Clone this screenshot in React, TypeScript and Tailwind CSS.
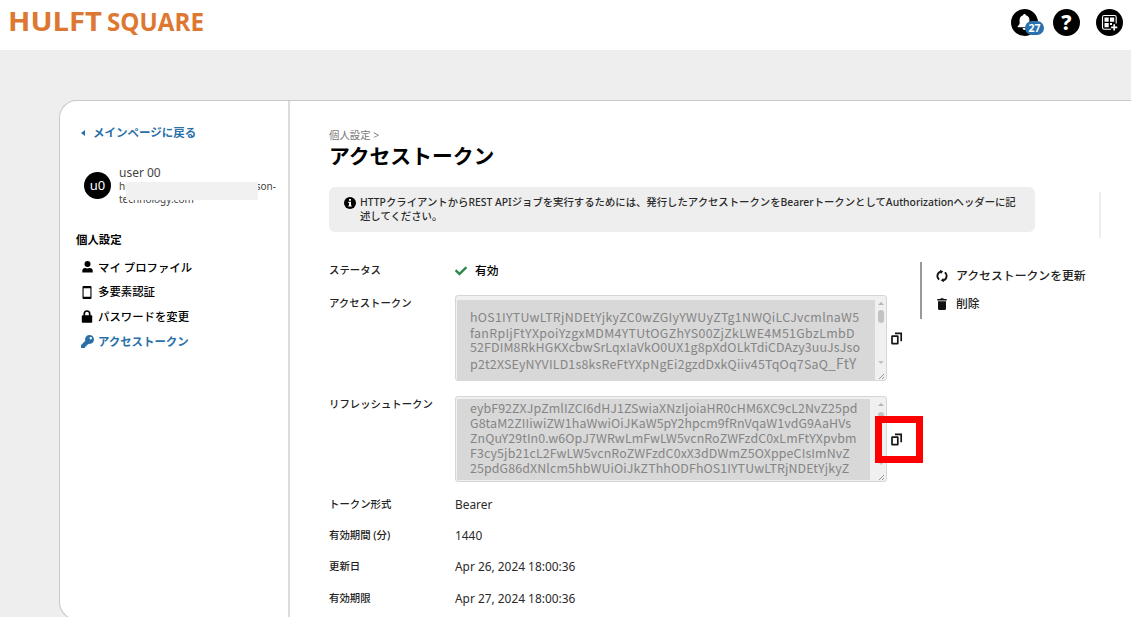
import type { ReactNode } from "react";
import { FaCheck, FaKey } from "react-icons/fa";

interface TokenLine {
  text: string;
  className: string;
  tail?: string;
}

const accessToken: TokenLine[] = [
  { text: "hOS1IYTUwLTRjNDEtYjkyZC0wZGIyYWUyZTg1NWQiLCJvcmlnaW5", className: "h-4 tracking-[0.28px]" },
  { text: "fanRpIjFtYXpoiYzgxMDM4YTUtOGZhYS00ZjZkLWE4M51GbzLmbD", className: "h-4 tracking-[0.31px]" },
  { text: "52FDIM8RkHGKXcbwSrLqxIaVkO0UX1g8pXdOLkTdiCDAzy3uuJsJso", className: "h-[13px] tracking-[0.13px]" },
  { text: "p2t2XSEyNYVILD1s8ksReFtYXpNgEi2gzdDxkQiiv45TqOq7SaQ", tail: "_FtY", className: "h-5 tracking-[0.2px]" },
];

const refreshToken: TokenLine[] = [
  { text: "eybF92ZXJpZmlIZCI6dHJ1ZSwiaXNzIjoiaHR0cHM6XC9cL2NvZ25pd", className: "h-[15px] tracking-[0.07px]" },
  { text: "G8taM2ZIIiwiZW1haWwiOiJKaW5pY2hpcm9fRnVqaW1vdG9AaHVs", className: "h-[15px] tracking-[0.1px]" },
  { text: "ZnQuY29tIn0.w6OpJ7WRwLmFwLW5vcnRoZWFzdC0xLmFtYXpvbm", className: "h-[15px] tracking-[0.07px]" },
  { text: "F3cy5jb21cL2FwLW5vcnRoZWFzdC0xX3dDWmZ5OXppeCIsImNvZ", className: "h-[15px] tracking-[0.13px]" },
  { text: "25pdG86dXNlcm5hbWUiOiJkZThhODFhOS1IYTUwLTRjNDEtYjkyZ", className: "h-[15px] tracking-[0.12px]" },
];

const details = [
  { label: "トークン形式", value: "Bearer" },
  { label: "有効期間 (分)", value: "1440" },
  { label: "更新日", value: "Apr 26, 2024 18:00:36" },
  { label: "有効期限", value: "Apr 27, 2024 18:00:36" },
];

function PersonIcon() {
  return (
    <svg width="11" height="12" viewBox="0 0 11 12">
      <circle cx="5.5" cy="3.1" r="3" />
      <path d="M.3 11.6V9.8Q.3 7.3 3.2 7q2.3.9 4.6 0 2.9.3 2.9 2.8v1.8Z" />
    </svg>
  );
}

function PhoneIcon() {
  return (
    <svg width="10" height="13" viewBox="0 0 10 13">
      <path fillRule="evenodd" d="M1.5 0h7Q9.5 0 9.5 1v11q0 1-1 1h-7q-1 0-1-1V1q0-1 1-1ZM1.6 2.2v8.6h6.8V2.2Z" />
    </svg>
  );
}

function LockIcon() {
  return (
    <svg width="12" height="13" viewBox="0 0 12 13">
      <path d="M3.3 6V3.7a2.7 2.7 0 0 1 5.4 0V6" fill="none" stroke="#000" strokeWidth="1.7" />
      <rect x="0.8" y="5.2" width="10.4" height="7.6" rx="0.8" />
    </svg>
  );
}

function RefreshIcon() {
  return (
    <svg width="12" height="12" viewBox="0 0 12 12" overflow="visible">
      <g fill="none" stroke="#111" strokeWidth="1.8">
        <path d="M3.2 9.6A4.5 4.5 0 0 1 4.9 1.6" />
        <path d="M8.8 2.4a4.5 4.5 0 0 1-1.7 8" />
      </g>
      <path d="M4-.2 7.2 1.5 4.8 4ZM8 12.2 4.8 10.5 7.2 8Z" fill="#111" />
    </svg>
  );
}

function TrashIcon() {
  return (
    <svg width="10" height="12" viewBox="0 0 10 12">
      <path d="M.3 1h2.9L3.8.2h2.4L6.8 1h2.9v1.4H.3ZM1 3.2h8v7.6q0 1.1-1.1 1.1H2.1Q1 11.9 1 10.8Z" fill="#111" />
    </svg>
  );
}

function CopyIcon() {
  return (
    <svg width="12" height="13" viewBox="0 0 12 13" fill="none" stroke="#151515" strokeWidth="1.7">
      <rect x="1" y="4.1" width="5.8" height="7.6" rx="0.4" />
      <path d="M4 1.3h6.2v8" />
    </svg>
  );
}

function Logo() {
  return (
    <svg width="200" height="30" viewBox="0 0 200 30" overflow="visible" className="font-['Open_Sans',sans-serif] font-bold" fill="#dd7832">
      <text x="0" y="25" fontSize="27.5" textLength="94" lengthAdjust="spacingAndGlyphs">HULFT</text>
      <text x="99" y="25" fontSize="24.5" textLength="97" lengthAdjust="spacingAndGlyphs">SQUARE</text>
    </svg>
  );
}

function Header() {
  return (
    <header className="flex h-[50px] shrink-0 justify-between bg-white pl-2 pr-2 pt-[6px]">
      <Logo />
      <div className="flex pt-[3px]">
        <div className="relative mr-[15px] h-[27px] w-[27px] rounded-full bg-black">
          <svg width="27" height="27" viewBox="0 0 27 27" fill="#fff">
            <path d="M13.5 5q1.3 0 1.4 1.3 3.5 1 3.5 4.8v4l2 2.4v.8H6.6v-.8l2-2.4v-4q0-3.8 3.5-4.8Q12.200 5 13.500 5ZM11.500 19h4q-.2 2-2 2t-2-2Z" />
          </svg>
          <span className="absolute left-[14px] top-[12px] flex h-[14px] w-[19px] items-center justify-center rounded-full bg-[#2a72ad] text-[10.5px] font-bold leading-none text-white">
            27
          </span>
        </div>
        <div className="mr-4 flex h-[27px] w-[27px] items-center justify-center rounded-full bg-black text-[21px] font-extrabold leading-none text-white">
          ?
        </div>
        <div className="flex h-[27px] w-[27px] items-center justify-center rounded-full bg-black">
          <svg width="17" height="17" viewBox="0 0 17 17" fill="none" stroke="#fff">
            <path d="M10 15.300H3.200q-1.700 0-1.700-1.700V3.200q0-1.700 1.700-1.700h10.300q1.700 0 1.700 1.700v6.300" strokeWidth="1.100" />
            <path d="M3.500 3.500h4.200v4.200H3.500ZM9 3.500h4.200v4.200H9ZM3.500 9h4.200v4.200H3.500ZM9 9h2v2H9Z" fill="#fff" stroke="none" />
            <path d="M13.200 10.200v6.200M10.100 13.300h6.200" strokeWidth="1.700" />
          </svg>
        </div>
      </div>
    </header>
  );
}

function NavItem({ icon, label, active }: { icon: ReactNode; label: string; active?: boolean }) {
  return (
    <li className={active ? "flex h-[24.7px] items-center font-bold text-[#2970a8]" : "flex h-[24.7px] items-center font-medium"}>
      <span className="mr-1 flex w-[14px] justify-center">{icon}</span>
      {label}
    </li>
  );
}

function Sidebar() {
  return (
    <aside className="w-[230px] shrink-0 border-r-2 border-[#dcdcdc] text-[11.4px]">
      <div className="mt-[22px] flex h-5 items-center pl-[21px] text-[11.5px] font-bold text-[#2970a8]">
        <span className="mr-2 h-0 w-0 border-y-[3px] border-r-[4px] border-y-transparent border-r-[#2970a8]" />
        メインページに戻る
      </div>
      <div className="mt-[22px] flex h-[44px] pl-6">
        <div className="mt-[7px] flex h-[27px] w-[27px] items-center justify-center rounded-full bg-black text-[13px] text-white">
          u0
        </div>
        <div className="relative ml-2 w-[157px] text-[#444]">
          <div className="h-[15px] text-[12px] leading-[15px]">user 00</div>
          <div className="flex h-[13px] justify-between text-[10px] leading-[13px]">
            <span>hu</span>
            <span>son-</span>
          </div>
          <div className="text-[10px] leading-[13px]">technology.com</div>
          <div className="absolute left-[7px] top-[17px] h-[18px] w-[132px] bg-[#f1f1f1]" />
        </div>
      </div>
      <h2 className="mt-[21px] h-5 pl-4 font-bold leading-5">個人設定</h2>
      <ul className="mt-[5px] pl-5">
        <NavItem icon={<PersonIcon />} label="マイ プロファイル" />
        <NavItem icon={<PhoneIcon />} label="多要素認証" />
        <NavItem icon={<LockIcon />} label="パスワードを変更" />
        <NavItem icon={<FaKey size={13} />} label="アクセストークン" active />
      </ul>
    </aside>
  );
}

function TokenBox({ lines, short }: { lines: TokenLine[]; short?: boolean }) {
  return (
    <div className="flex h-[86px] w-[432px] rounded-[3px] border border-[#d6d6d6] bg-[#f0f0f0] pl-px">
      <div
        className={
          short
            ? "mt-[2px] h-[81px] w-[413px] bg-[#d8d8d8] pl-[13px] pt-[2px]"
            : "mt-1 h-[81px] w-[418px] bg-[#d8d8d8] pl-[13px] pt-[9px]"
        }
      >
        {lines.map((line) => (
          <div key={line.text} className={`flex items-center whitespace-nowrap font-['Noto_Sans_CJK_JP',sans-serif] text-[12.4px] leading-none text-[#858585] ${line.className}`}>
            {line.text}
            {line.tail && <span className="text-[13.8px]">{line.tail}</span>}
          </div>
        ))}
      </div>
      <div className="ml-auto flex w-[10px] flex-col items-center pt-[6px]">
        <span className="h-0 w-0 border-x-[3px] border-b-[3px] border-x-transparent border-b-[#b5b5b5]" />
        <span className={short ? "mt-[6px] h-[8px] w-[6px] rounded-full bg-[#c2c2c2]" : "mt-[5px] h-[13px] w-[6px] rounded-full bg-[#c2c2c2]"} />
        <span className="mt-auto h-0 w-0 border-x-[3px] border-t-[3px] border-x-transparent border-t-[#c2c2c2]" />
        <svg className="mt-[8px]" width="8" height="8" viewBox="0 0 8 8" stroke="#999" strokeWidth="1">
          <path d="M2 7 7 2M5 7l2-2" />
        </svg>
      </div>
    </div>
  );
}

function Row({ label, className, children }: { label: string; className: string; children: ReactNode }) {
  return (
    <div className={`flex ${className}`}>
      <dt className="w-[126px] shrink-0 text-[10.4px] font-medium leading-4 text-[#222]">{label}</dt>
      <dd className="flex">{children}</dd>
    </div>
  );
}

export default function App() {
  return (
    <div className="flex h-[617px] w-[1131px] flex-col overflow-hidden bg-[#eeeeee] font-['Noto_Sans','Noto_Sans_CJK_JP',sans-serif] text-black">
      <Header />
      <div className="pl-[59px] pt-[50px]">
        <div className="flex h-[520px] overflow-hidden rounded-l-[18px] border-y border-l border-[#c8c8c8] bg-white">
          <Sidebar />
          <main className="grow pl-[39px] pt-[27px]">
            <div className="h-[14px] text-[10.4px] leading-[14px] text-[#777]">個人設定 &gt;</div>
            <h1 className="h-[28px] text-[20.8px] font-bold leading-[28px]">アクセストークン</h1>

            <div className="mt-[17px] flex">
              <div className="flex h-[45px] w-[706px] rounded-[6px] bg-[#eeeeee] pl-[15px] pt-2">
                <svg className="mr-1 mt-[2px] shrink-0" width="12" height="12" viewBox="0 0 12 12">
                  <circle cx="6" cy="6" r="6" />
                  <path d="M5 2h2v1.7H5ZM4.3 4.8H7v3.6h.8v1.2H4.3V8.4H5V6h-.7Z" fill="#fff" />
                </svg>
                <p className="whitespace-nowrap text-[10.36px] font-medium leading-[14px] text-[#2a2a2a]">
                  HTTPクライアントからREST APIジョブを実行するためには、発行したアクセストークンをBearerトークンとしてAuthorizationヘッダーに記
                  <br />
                  述してください。
                </p>
              </div>
              <div className="ml-[64px] mt-[5px] h-[46px] w-[2px] bg-[#eeeeee]" />
            </div>

            <div className="mt-[24px] flex">
              <dl className="w-[591px] shrink-0">
                <Row label="ステータス" className="h-[33px]">
                  <FaCheck size={12} className="mt-[3px] text-[#2c8a4b]" />
                  <span className="ml-2 text-[11.8px] font-medium leading-4">有効</span>
                </Row>
                <Row label="アクセストークン" className="h-[101px]">
                  <TokenBox lines={accessToken} />
                  <div className="ml-1 mt-[37px]">
                    <CopyIcon />
                  </div>
                </Row>
                <Row label="リフレッシュトークン" className="h-[100px]">
                  <div className="relative flex">
                    <TokenBox lines={refreshToken} short />
                    <div className="ml-1 mt-[37px]">
                      <CopyIcon />
                    </div>
                    <div className="absolute left-[420px] top-[20px] h-[47px] w-[48px] border-[7px] border-[#ff0000]" />
                  </div>
                </Row>
                {details.map((item) => (
                  <Row key={item.label} label={item.label} className="h-[31.2px]">
                    <span className="text-[11.9px] leading-4 text-[#2a2a2a]">{item.value}</span>
                  </Row>
                ))}
              </dl>
              <div className="h-[57px] border-l-2 border-[#999] pl-[14px] text-[11.85px] font-medium text-[#222]">
                <div className="flex h-[27px] items-center">
                  <span className="mr-2 flex w-[12px] justify-center"><RefreshIcon /></span>
                  アクセストークンを更新
                </div>
                <div className="mt-px flex h-[28px] items-center">
                  <span className="mr-2 flex w-[12px] justify-center"><TrashIcon /></span>
                  削除
                </div>
              </div>
            </div>
          </main>
        </div>
      </div>
    </div>
  );
}
